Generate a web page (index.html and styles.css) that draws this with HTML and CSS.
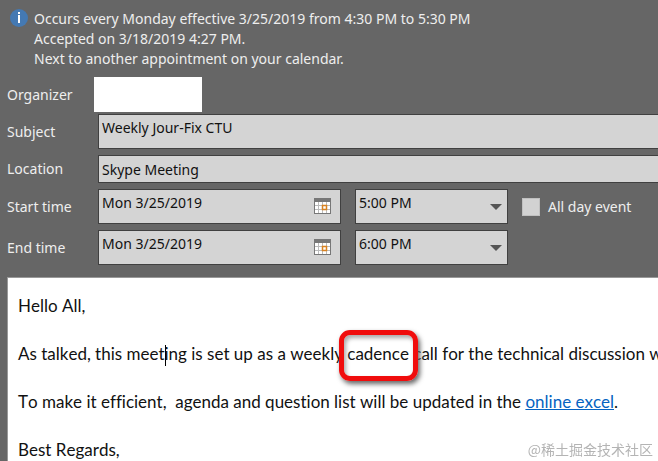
FILE: index.html
```html
<!DOCTYPE html>
<html lang="en">
<head>
<meta charset="utf-8">
<title>Weekly Jour-Fix CTU</title>
<link rel="stylesheet" href="styles.css">
</head>
<body>
<main class="meeting">
  <header class="info">
    <svg class="info-icon" viewBox="0 0 18 18" aria-hidden="true">
      <circle cx="9" cy="9" r="9" fill="#4479b3"/>
      <rect x="8" y="3" width="2" height="2" fill="#fff"/>
      <path d="M8 6h2v8H8z" fill="#fff"/>
    </svg>
    <div class="info-text">
      <p>Occurs every Monday effective 3/25/2019 from 4:30 PM to 5:30 PM</p>
      <p>Accepted on 3/18/2019 4:27 PM.</p>
      <p>Next to another appointment on your calendar.</p>
    </div>
  </header>

  <form class="fields">
    <div class="row organizer">
      <span class="label">Organizer</span>
      <span class="organizer-name"></span>
    </div>
    <div class="row">
      <label class="label" for="subject">Subject</label>
      <input class="field wide" id="subject" type="text" value="Weekly Jour-Fix CTU">
    </div>
    <div class="row">
      <label class="label" for="location">Location</label>
      <input class="field wide short" id="location" type="text" value="Skype Meeting">
    </div>
    <div class="row">
      <label class="label" for="start-date">Start time</label>
      <div class="date">
        <input class="field" id="start-date" type="text" value="Mon 3/25/2019">
        <button class="picker" type="button" aria-label="Pick start date">
          <svg viewBox="0 0 17 16" aria-hidden="true">
            <path d="M0 0h17v16H0z" fill="#777"/>
            <path d="M1 4h15v11H1z" fill="#fff"/>
            <path d="M4.500 4v11M8.500 4v11M12.500 4v11M1 7.500h15M1 11.500h15" stroke="#bbb" fill="none"/>
            <path d="M8.500 7.500h4v4h-4z" fill="#fff" stroke="#d98220" stroke-width="1.500"/>
          </svg>
        </button>
      </div>
      <div class="time">
        <select class="field" aria-label="Start hour"><option>5:00 PM</option></select>
        <svg class="arrow" viewBox="0 0 12 6" aria-hidden="true"><path d="M0 0h12L6 6z" fill="#555"/></svg>
      </div>
      <label class="all-day"><input class="check" type="checkbox">All day event</label>
    </div>
    <div class="row">
      <label class="label" for="end-date">End time</label>
      <div class="date">
        <input class="field" id="end-date" type="text" value="Mon 3/25/2019">
        <button class="picker" type="button" aria-label="Pick end date">
          <svg viewBox="0 0 17 16" aria-hidden="true">
            <path d="M0 0h17v16H0z" fill="#777"/>
            <path d="M1 4h15v11H1z" fill="#fff"/>
            <path d="M4.500 4v11M8.500 4v11M12.500 4v11M1 7.500h15M1 11.500h15" stroke="#bbb" fill="none"/>
            <path d="M8.500 7.500h4v4h-4z" fill="#fff" stroke="#d98220" stroke-width="1.500"/>
          </svg>
        </button>
      </div>
      <div class="time">
        <select class="field" aria-label="End hour"><option>6:00 PM</option></select>
        <svg class="arrow" viewBox="0 0 12 6" aria-hidden="true"><path d="M0 0h12L6 6z" fill="#555"/></svg>
      </div>
    </div>
  </form>

  <article class="message">
    <p>Hello All,</p>
    <p>As talked, this meet<span class="caret"></span>ing is set up as a weekly <span class="marked">cadence</span> call for the technical discussion w</p>
    <p>To make it efficient,&nbsp; agenda and question list will be updated in the <a href="#excel">online excel</a>.</p>
    <p>Best Regards,</p>
  </article>
</main>
<div class="watermark" lang="zh-CN">@稀土掘金技术社区</div>
</body>
</html>
```
FILE: styles.css
```css
* {
  box-sizing: border-box;
}

body {
  margin: 0;
  background: #666;
  color: #eee;
  font: 14px/20px "Noto Sans", "Open Sans", sans-serif;
}

p {
  margin: 0;
}

.meeting {
  display: flex;
  flex-direction: column;
  height: 100vh;
  overflow: hidden;
}

.info {
  display: flex;
  gap: 6px;
  padding: 9px 10px 8px;
}

.info-icon {
  flex: none;
  width: 18px;
  height: 18px;
}

.info-text {
  white-space: nowrap;
}

.fields {
  display: grid;
  gap: 6px;
  padding-left: 7px;
}

.row {
  display: flex;
  align-items: center;
}

.label {
  flex: none;
  width: 91px;
}

.organizer {
  margin-bottom: -4px;
}

.organizer .label {
  width: 87px;
}

.organizer-name {
  width: 108px;
  height: 35px;
  background: #fff;
}

.field {
  display: block;
  width: 100%;
  height: 35px;
  margin: 0;
  padding: 0 3px 8px;
  border: 1px solid #404040;
  border-radius: 0;
  background: #d4d4d4;
  color: #111;
  font: inherit;
  appearance: none;
}

.wide {
  flex: 1;
  border-right: 0;
}

.short {
  height: 28px;
  padding-bottom: 0;
}

.date,
.time {
  position: relative;
  flex: none;
}

.date {
  width: 243px;
  margin-right: 14px;
}

.time {
  width: 153px;
  margin-right: 14px;
}

.picker {
  position: absolute;
  top: 9px;
  right: 10px;
  padding: 0;
  border: 0;
  background: none;
}

.picker svg {
  display: block;
  width: 17px;
  height: 16px;
}

.arrow {
  position: absolute;
  top: 15px;
  right: 6px;
  width: 12px;
  height: 6px;
  pointer-events: none;
}

.all-day {
  display: flex;
  align-items: center;
  gap: 8px;
  white-space: nowrap;
}

.check {
  width: 18px;
  height: 18px;
  margin: 0;
  border: 1px solid #c0c0c0;
  background: #d2d2d2;
  appearance: none;
}

.message {
  flex: 1;
  display: grid;
  align-content: start;
  gap: 24px;
  margin: 12px 0 0 7px;
  padding: 16px 0 0 10px;
  border: 1px solid #999;
  border-width: 1px 0 0 1px;
  background: #fff;
  color: #111;
  font: 17px/24px Lato, "Open Sans", sans-serif;
  font-kerning: none;
  font-variant-ligatures: none;
  white-space: nowrap;
  overflow: hidden;
}

.message a {
  color: #0563c1;
}

.caret {
  display: inline-block;
  width: 1px;
  height: 21px;
  margin-right: -1px;
  background: #000;
  vertical-align: middle;
}

.marked {
  position: relative;
}

.marked::after {
  content: "";
  position: absolute;
  inset: -13px -9px -17px -8px;
  border: 5px solid #f00d0d;
  border-radius: 11px;
  box-shadow: 2px 3px 5px #666, inset 2px 3px 4px #aaa;
}

.watermark {
  position: fixed;
  right: 5px;
  bottom: 2px;
  color: #b4b4b4;
  font: 14px/20px "Noto Sans CJK SC", sans-serif;
}
```
